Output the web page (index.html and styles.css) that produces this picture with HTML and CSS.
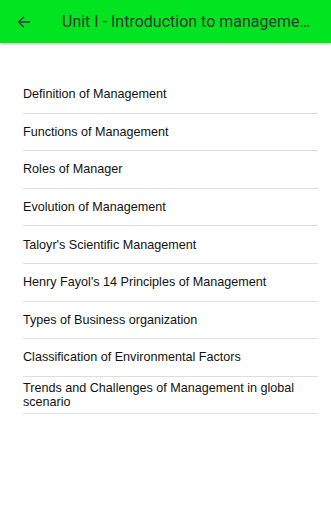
FILE: index.html
```html
<html>
    <head>
        <title>Unit I - Introduction to management</title>
        <link rel="stylesheet" href="styles.css">
    </head>
    <body>
        <div class="toolbar">
            <a class="back" href="#">
                <svg width="14" height="14" viewBox="0 0 16 16"><path d="M15 8H2M8 2L2 8l6 6" fill="none" stroke="#4a3a4c" stroke-width="1.6"/></svg>
            </a>
            <div class="title">Unit I - Introduction to management and its principles</div>
        </div>
        <div class="topics">
            <div class="topic">Definition of Management</div>
            <div class="topic">Functions of Management</div>
            <div class="topic">Roles of Manager</div>
            <div class="topic">Evolution of Management</div>
            <div class="topic">Taloyr's Scientific Management</div>
            <div class="topic">Henry Fayol's 14 Principles of Management</div>
            <div class="topic">Types of Business organization</div>
            <div class="topic">Classification of Environmental Factors</div>
            <div class="topic">Trends and Challenges of Management in global scenario</div>
        </div>
    </body>
</html>
```
FILE: styles.css
```css
body {
    font-family: "Liberation Sans", Arial, sans-serif;
    margin: 0;
    background: #fff;
}
.toolbar {
    display: flex;
    align-items: center;
    height: 43px;
    background: #00e51f;
    box-shadow: 0 1px 3px rgba(0, 0, 0, 0.3);
}
.back {
    display: flex;
    width: 14px;
    margin: 0 31px 0 17px;
}
.title {
    flex: 1;
    min-width: 0;
    color: #383838;
    font-family: Roboto, sans-serif;
    font-size: 16px;
    white-space: nowrap;
    overflow: hidden;
    text-overflow: ellipsis;
    padding-right: 18px;
}
.topics {
    margin: 33px 13px 0 23px;
}
.topic {
    display: flex;
    align-items: center;
    min-height: 37.6px;
    box-sizing: border-box;
    font-size: 12.6px;
    line-height: 14px;
    color: #111;
    border-bottom: 1px solid #ddd;
}
```
